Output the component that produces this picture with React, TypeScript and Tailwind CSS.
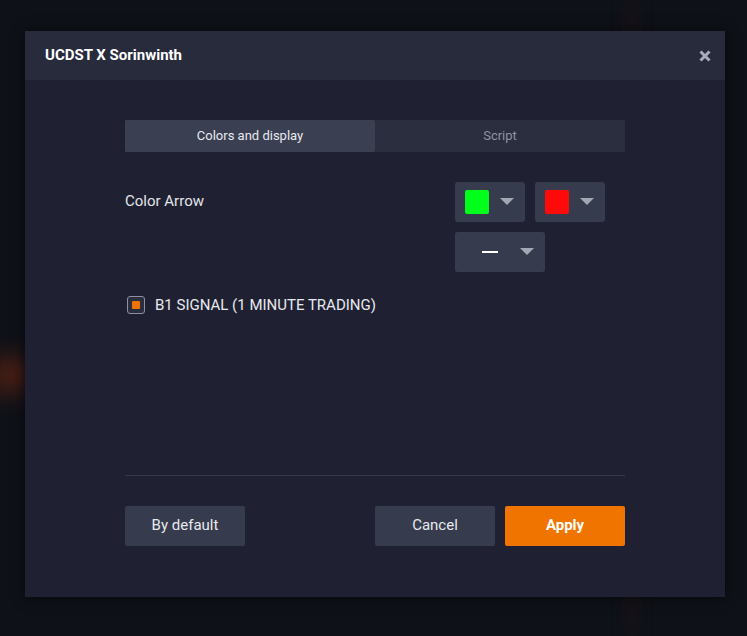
import React from 'react'

const Caret = () => (
  <svg width="14" height="8" viewBox="0 0 14 8" className="shrink-0">
    <path d="M0 0 L14 0 L7 7 Z" fill="#a3a7b3" />
  </svg>
)

const ColorSelect = ({ color }: { color: string }) => (
  <button className="flex h-10 w-[70px] items-center gap-[11px] rounded-[3px] bg-[#363b4d] pl-[10px]">
    <span className="h-6 w-6 rounded-[2px]" style={{ backgroundColor: color }} />
    <Caret />
  </button>
)

export default function App() {
  return (
    <div
      className="relative h-[636px] w-[747px] overflow-hidden bg-[#0e1118]"
      style={{ fontFamily: 'Roboto, "Noto Sans", sans-serif' }}>
      {/* faint chart glow behind the backdrop */}
      <div className="absolute left-[-10px] top-[355px] h-[40px] w-[40px] rounded-full bg-[#7a2a10] opacity-60 blur-md" />
      <div className="absolute left-[628px] top-0 h-full w-[8px] bg-[#2a1418] opacity-60 blur-sm" />

      <div className="absolute left-[25px] top-[31px] flex h-[566px] w-[700px] flex-col bg-[#1f2132] shadow-[0_0_12px_rgba(0,0,0,0.6)]">
        {/* Header */}
        <div className="flex h-[49px] shrink-0 items-center justify-between bg-[#282b3c] pl-5 pr-[10px]">
          <h1 className="text-[15px] font-bold text-white">UCDST X Sorinwinth</h1>
          <button className="flex h-5 w-5 items-center justify-center">
            <svg width="12" height="12" viewBox="0 0 12 12">
              <path d="M1.5 1.5 L10.5 10.5 M10.5 1.5 L1.5 10.5" stroke="#a8acb8" strokeWidth="3" />
            </svg>
          </button>
        </div>

        {/* Body */}
        <div className="flex flex-1 flex-col px-[100px] pt-10">
          <div className="flex h-8 bg-[#2a2e3f] text-[13px]">
            <button className="flex-1 rounded-[2px] bg-[#3a3f52] text-[#e8e9ee]">Colors and display</button>
            <button className="flex-1 text-[#8e93a2]">Script</button>
          </div>

          <div className="mt-[30px] flex">
            <div className="flex-1 pt-[8px] text-[15px] text-[#e3e4ea]">Color Arrow</div>
            <div className="mr-5 flex w-[150px] flex-col gap-[10px]">
              <div className="flex gap-[10px]">
                <ColorSelect color="#00ff1a" />
                <ColorSelect color="#ff0a0a" />
              </div>
              <button className="flex h-10 w-[90px] items-center rounded-[3px] bg-[#363b4d] pl-[27px]">
                <span className="h-[1.5px] w-4 bg-white" />
                <span className="ml-[22px]">
                  <Caret />
                </span>
              </button>
            </div>
          </div>

          <label className="mt-[22px] flex items-center gap-[10px] pl-[2px]">
            <span className="flex h-[18px] w-[18px] items-center justify-center rounded-[3px] border border-[#8c90a0] bg-[#2a2e3f]">
              <span className="h-2 w-2 rounded-[1px] bg-[#f07400]" />
            </span>
            <span className="text-[15px] text-[#e8e9ee]">B1 SIGNAL (1 MINUTE TRADING)</span>
          </label>

          <div className="mt-[158px] h-px bg-[#363a4b]" />

          <div className="mt-[30px] flex items-center text-[15px]">
            <button className="h-10 w-[120px] rounded-[2px] bg-[#363b4d] text-[#e8e9ee]">By default</button>
            <button className="ml-auto h-10 w-[120px] rounded-[2px] bg-[#363b4d] text-[#e8e9ee]">Cancel</button>
            <button className="ml-[10px] h-10 w-[120px] rounded-[2px] bg-[#f07400] font-bold text-white">Apply</button>
          </div>
        </div>
      </div>
    </div>
  )
}
